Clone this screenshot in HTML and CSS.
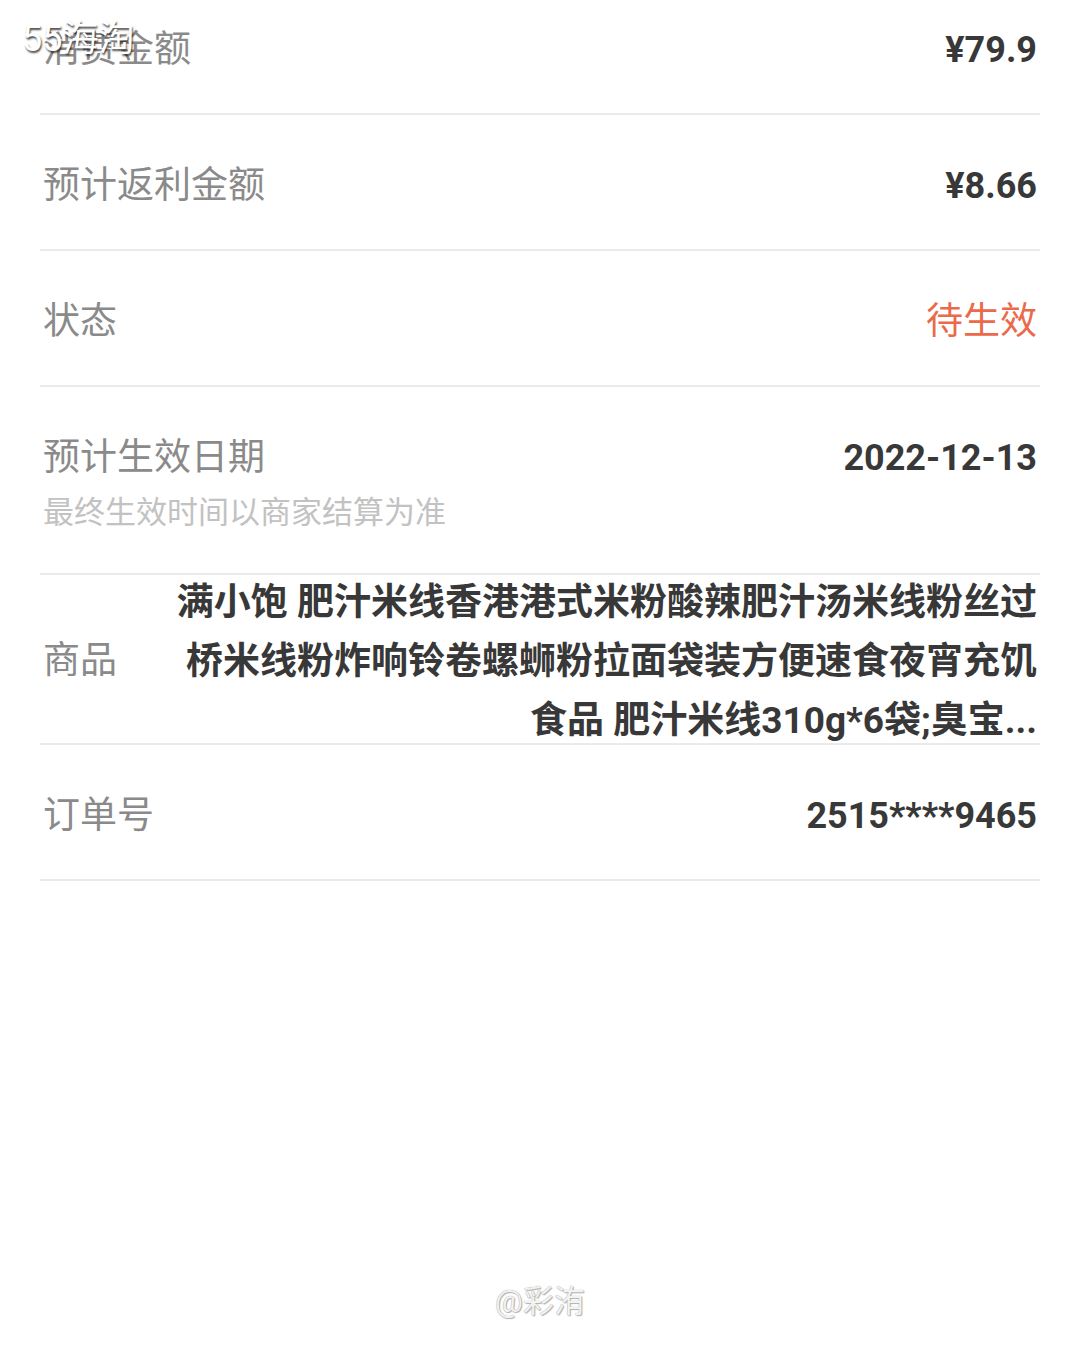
FILE: index.html
```html
<!DOCTYPE html>
<html lang="zh-CN">
<head>
    <meta charset="UTF-8">
    <meta name="viewport" content="width=device-width, initial-scale=1.0">
    <title>订单详情</title>
    <link rel="stylesheet" href="styles.css">
</head>
<body>

<div class="detail">
    <div class="row">
        <span class="label">消费金额</span>
        <span class="value">¥79.9</span>
    </div>
    <div class="row">
        <span class="label">预计返利金额</span>
        <span class="value">¥8.66</span>
    </div>
    <div class="row">
        <span class="label">状态</span>
        <span class="value status">待生效</span>
    </div>
    <div class="row row-top">
        <div>
            <div class="label">预计生效日期</div>
            <div class="sub">最终生效时间以商家结算为准</div>
        </div>
        <span class="value">2022-12-13</span>
    </div>
    <div class="row row-goods">
        <span class="label">商品</span>
        <div class="goods">满小饱 肥汁米线香港港式米粉酸辣肥汁汤米线粉丝过桥米线粉炸响铃卷螺蛳粉拉面袋装方便速食夜宵充饥食品 肥汁米线310g*6袋;臭宝...</div>
    </div>
    <div class="row">
        <span class="label">订单号</span>
        <span class="value">2515****9465</span>
    </div>
</div>

<div class="mark-top">55海淘</div>
<div class="mark-bottom">@彩洧</div>

</body>
</html>
```

FILE: styles.css
```css
body {
    margin: 0;
    background: #fff;
    font-family: Roboto, "Noto Sans CJK SC", sans-serif;
    position: relative;
    height: 1350px;
    overflow: hidden;
}
.detail {
    margin: -21px 40px 0;
}
.row {
    box-sizing: border-box;
    height: 136px;
    display: flex;
    justify-content: space-between;
    align-items: center;
    padding: 8px 3px 0;
    border-bottom: 2px solid #ebebeb;
}
.label {
    font-size: 37px;
    line-height: 50px;
    height: 50px;
    color: #8a8a8a;
}
.value {
    font-size: 36px;
    line-height: 50px;
    height: 50px;
    font-weight: bold;
    color: #383838;
}
.status {
    font-weight: normal;
    font-size: 37px;
    color: #ea6a4b;
}
.row-top {
    height: 188px;
    align-items: flex-start;
    padding-top: 46px;
}
.sub {
    margin-top: 10px;
    font-size: 31px;
    line-height: 40px;
    color: #c2c2c2;
}
.row-goods {
    height: 170px;
    padding-top: 4px;
}
.goods {
    width: 870px;
    text-align: right;
    font-size: 37px;
    line-height: 59px;
    font-weight: bold;
    color: #383838;
}
.mark-top {
    position: absolute;
    left: 22px;
    top: 19px;
    font-size: 36px;
    line-height: 40px;
    color: #fff;
    text-shadow: 1px 2px 2px rgba(0, 0, 0, 0.7);
}
.mark-bottom {
    position: absolute;
    left: 0;
    right: 0;
    top: 1282px;
    text-align: center;
    font-size: 31px;
    line-height: 40px;
    color: #f2f2f2;
    text-shadow: 0 0 1px #8c8c8c, 1px 1px 1px #b5b5b5;
}
```
